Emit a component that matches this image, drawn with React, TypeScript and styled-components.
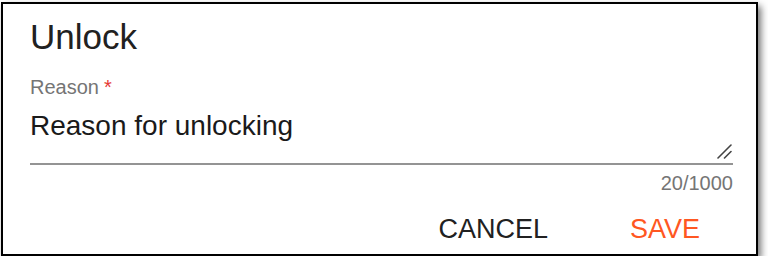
import React, { useState } from "react";
import styled, { createGlobalStyle } from "styled-components";

const GlobalStyle = createGlobalStyle`
  html, body {
    margin: 0;
    padding: 0;
    background: #ffffff;
  }
  body {
    font-family: "Liberation Sans", Arial, Helvetica, sans-serif;
    color: #212121;
  }
`;

const Dialog = styled.section`
  box-sizing: border-box;
  width: 757px;
  height: 254px;
  margin: 2px 0 0 1px;
  border: 2px solid #000000;
  background: #ffffff;
  box-shadow: 3px 4px 7px rgba(0, 0, 0, 0.55);
  padding: 13px 23px 0 27px;
  display: flex;
  flex-direction: column;
`;

const Title = styled.h2`
  margin: 0;
  font-size: 35px;
  line-height: 40px;
  font-weight: 400;
  color: #212121;
`;

const Field = styled.div`
  margin-top: 18px;
  display: flex;
  flex-direction: column;
`;

const Label = styled.label`
  font-size: 20px;
  line-height: 24px;
  color: #757575;
`;

const Required = styled.span`
  color: #e53935;
  margin-left: 5px;
`;

const InputWrap = styled.div`
  position: relative;
  margin-top: 11px;
  border-bottom: 2px solid #949494;
`;

const TextArea = styled.textarea`
  display: block;
  box-sizing: border-box;
  width: 100%;
  height: 53px;
  margin: 0;
  padding: 0 20px 0 0;
  border: none;
  outline: none;
  resize: none;
  background: transparent;
  font-family: "Liberation Sans", Arial, Helvetica, sans-serif;
  font-size: 28px;
  line-height: 32px;
  color: #1a1a1a;
`;

const Grip = styled.svg`
  position: absolute;
  right: 1px;
  bottom: 4px;
  width: 15px;
  height: 15px;
  pointer-events: none;
`;

const Counter = styled.div`
  margin-top: 6px;
  text-align: right;
  font-size: 20px;
  line-height: 24px;
  color: #757575;
`;

const Actions = styled.div`
  margin-top: 18px;
  display: flex;
  justify-content: flex-end;
  gap: 82px;
  padding-right: 33px;
`;

const ActionButton = styled.button<{ $primary?: boolean }>`
  margin: 0;
  padding: 0;
  border: none;
  background: none;
  cursor: pointer;
  font-family: "Liberation Sans", Arial, Helvetica, sans-serif;
  font-size: 27px;
  line-height: 32px;
  color: ${({ $primary }) => ($primary ? "#ff5722" : "#212121")};
`;

const MAX = 1000;

export default function App() {
  const [reason, setReason] = useState("Reason for unlocking");

  return (
    <>
      <GlobalStyle />
      <Dialog>
        <Title>Unlock</Title>
        <Field>
          <Label htmlFor="reason">
            Reason<Required>*</Required>
          </Label>
          <InputWrap>
            <TextArea
              id="reason"
              value={reason}
              maxLength={MAX}
              onChange={(e) => setReason(e.target.value)}
            />
            <Grip viewBox="0 0 15 15">
              <path d="M1 14 L14 1" stroke="#444" strokeWidth="1.6" strokeLinecap="round" />
              <path d="M7.5 14 L14 7.5" stroke="#444" strokeWidth="1.6" strokeLinecap="round" />
            </Grip>
          </InputWrap>
          <Counter>
            {reason.length}/{MAX}
          </Counter>
        </Field>
        <Actions>
          <ActionButton>CANCEL</ActionButton>
          <ActionButton $primary>SAVE</ActionButton>
        </Actions>
      </Dialog>
    </>
  );
}
